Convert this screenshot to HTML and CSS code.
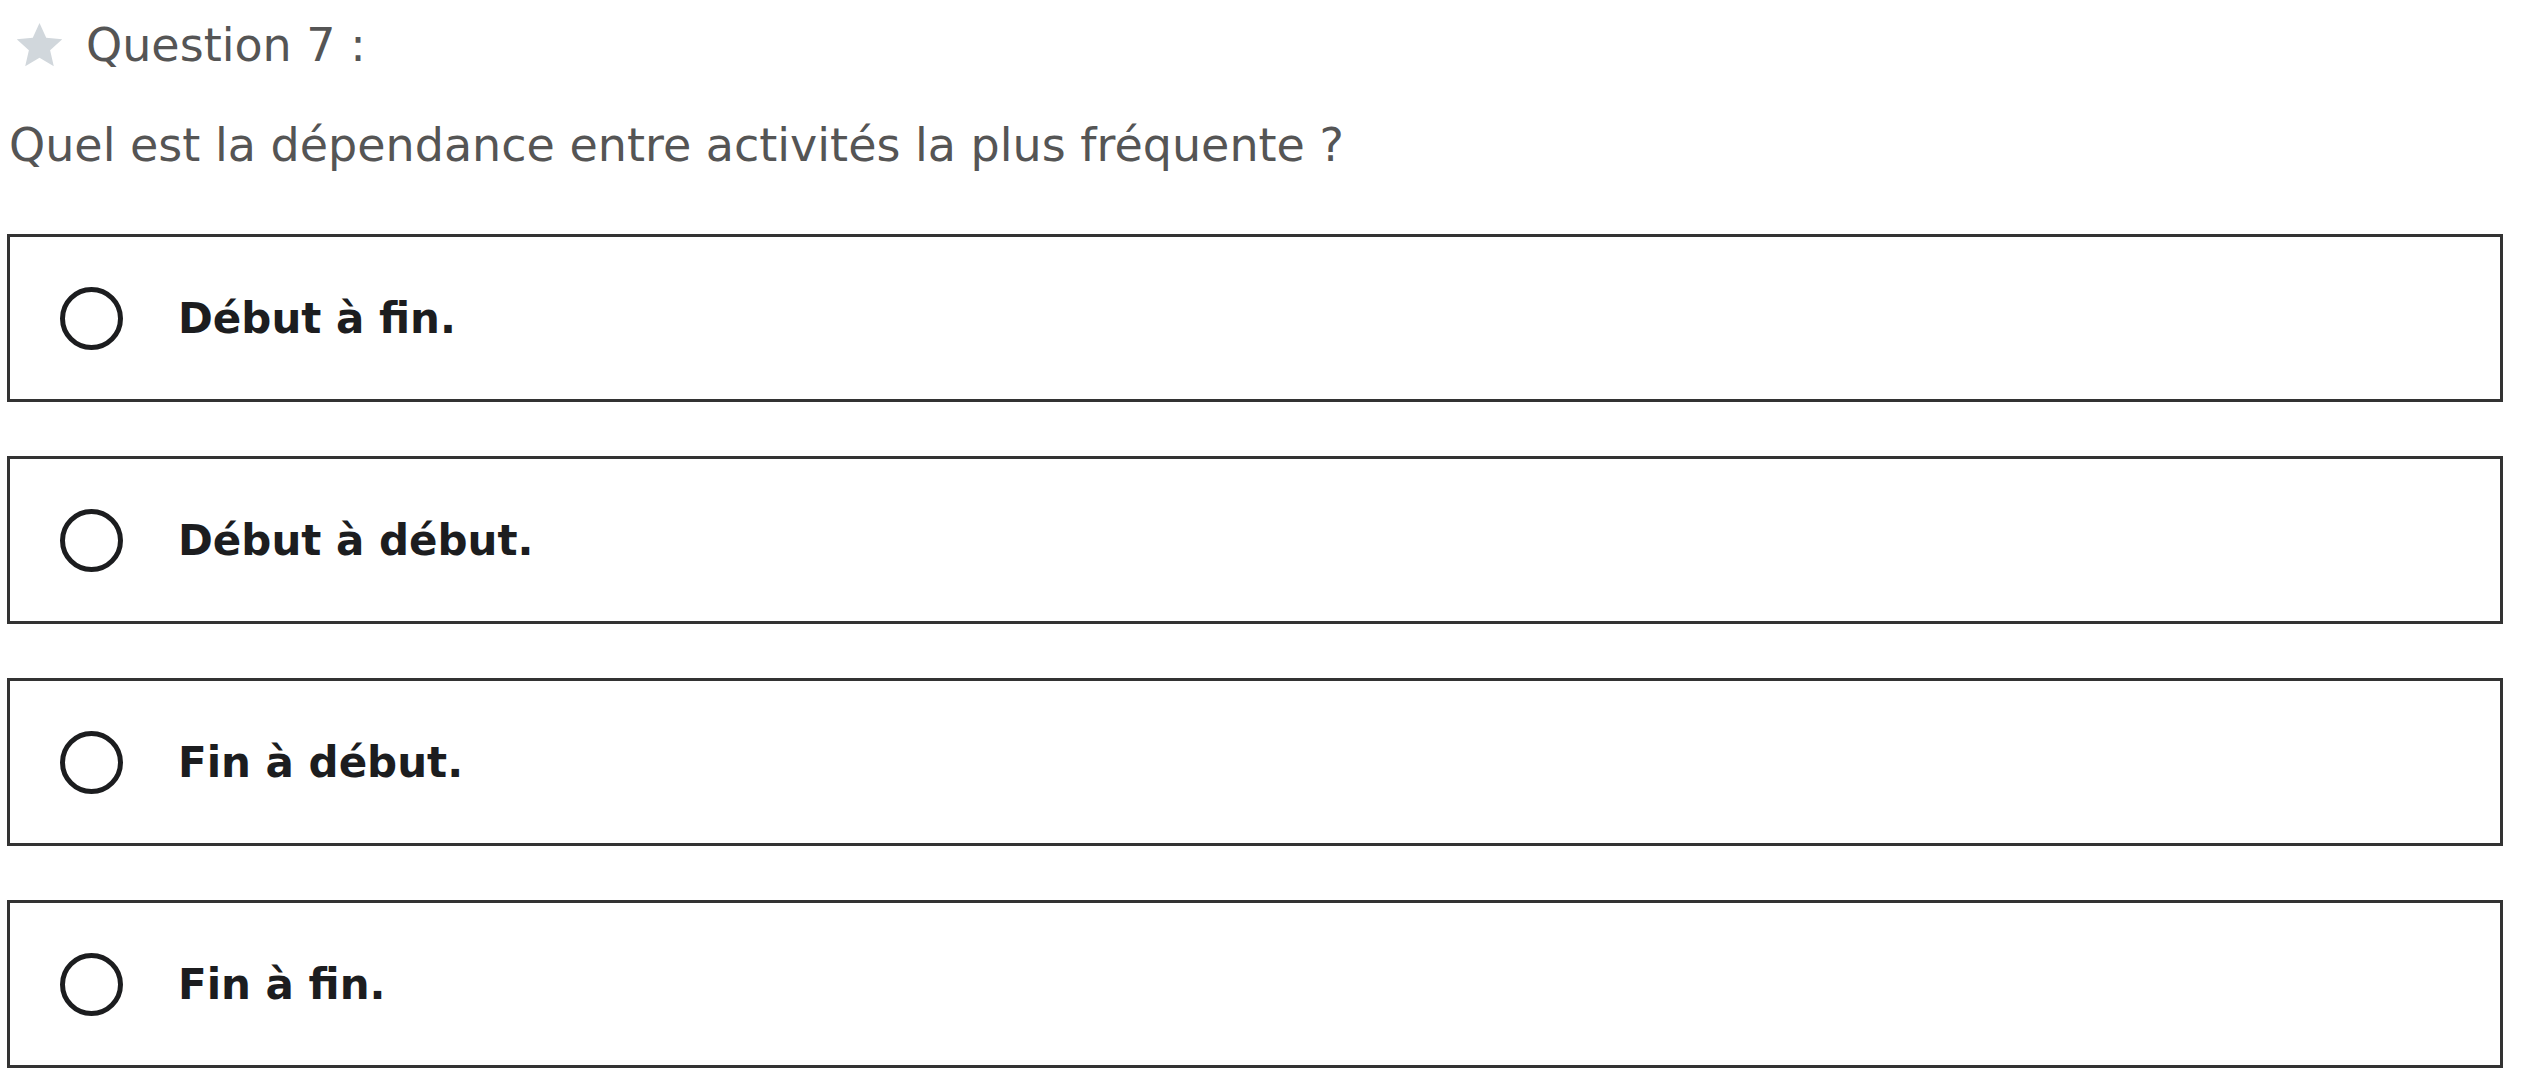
FILE: index.html
```html
<!DOCTYPE html>
<html lang="fr">
<head>
<meta charset="utf-8">
<title>Question 7</title>
<link rel="stylesheet" href="styles.css">
</head>
<body>
<div class="quiz">
  <div class="quiz-header">
    <svg class="star" viewBox="0 0 24 24" aria-hidden="true"><path d="M12 1.8l3.1 6.9 7.4.7-5.6 5 1.7 7.4L12 17.9l-6.6 3.9 1.7-7.4-5.6-5 7.4-.7z"/></svg>
    <span class="quiz-title">Question 7 :</span>
  </div>
  <p class="quiz-prompt">Quel est la dépendance entre activités la plus fréquente ?</p>
  <ul class="answers">
    <li class="answer"><span class="radio"></span><span class="answer-text">Début à fin.</span></li>
    <li class="answer"><span class="radio"></span><span class="answer-text">Début à début.</span></li>
    <li class="answer"><span class="radio"></span><span class="answer-text">Fin à début.</span></li>
    <li class="answer"><span class="radio"></span><span class="answer-text">Fin à fin.</span></li>
  </ul>
</div>
</body>
</html>
```
FILE: styles.css
```css
html, body {
  margin: 0;
  padding: 0;
  background: #ffffff;
}
body {
  font-family: "DejaVu Sans", "Liberation Sans", sans-serif;
}
.quiz {
  display: flex;
  flex-direction: column;
  padding: 19px 32px 0 7px;
}
.quiz-header {
  display: flex;
  align-items: center;
  gap: 19px;
  padding-left: 5px;
  height: 52px;
}
.star {
  width: 55px;
  height: 52px;
  fill: #d1d7dc;
  flex: none;
}
.quiz-title {
  font-size: 46px;
  line-height: 52px;
  color: #555555;
}
.quiz-prompt {
  margin: 48px 0 0 2px;
  font-size: 46px;
  line-height: 52px;
  color: #555555;
}
.answers {
  list-style: none;
  margin: 63px 0 0 0;
  padding: 0;
  display: flex;
  flex-direction: column;
  gap: 54px;
}
.answer {
  box-sizing: border-box;
  height: 168px;
  border: 3px solid #333333;
  display: flex;
  align-items: center;
  padding-left: 50px;
  gap: 55px;
}
.radio {
  box-sizing: border-box;
  width: 63px;
  height: 63px;
  border: 5px solid #1c1d1f;
  border-radius: 50%;
  flex: none;
}
.answer-text {
  font-size: 42px;
  font-weight: 700;
  color: #1c1d1f;
}
```
